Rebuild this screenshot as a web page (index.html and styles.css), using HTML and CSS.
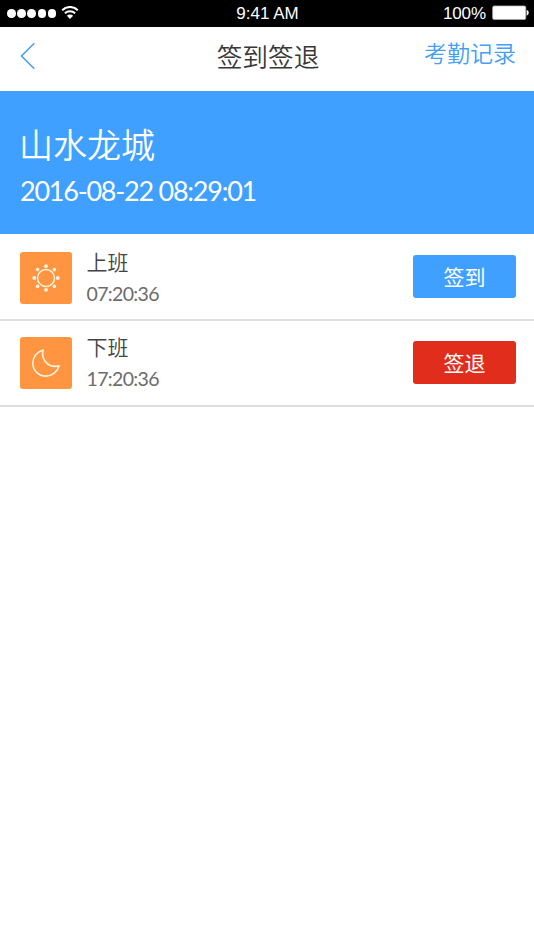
FILE: index.html
```html
<!DOCTYPE html>
<html lang="zh-CN">
<head>
<meta charset="utf-8">
<title>签到签退</title>
<link rel="stylesheet" href="styles.css">
</head>
<body>
<header class="status">
  <div class="signal">
    <span class="dots"><i></i><i></i><i></i><i></i><i></i></span>
    <svg class="wifi" width="18" height="14" viewBox="0 0 18 14" fill="none" stroke="#fff" stroke-width="2">
      <path d="M1.2 4.2a11 11 0 0 1 15.6 0M3.9 7.3a7.2 7.2 0 0 1 10.2 0"/>
      <path d="M9 13 5.9 9.8a4.4 4.4 0 0 1 6.2 0z" fill="#fff" stroke="none"/>
    </svg>
  </div>
  <span class="clock">9:41 AM</span>
  <div class="power">
    <span class="percent">100%</span>
    <svg class="battery" width="37" height="16" viewBox="0 0 37 16">
      <rect x=".6" y=".9" width="33.2" height="13.6" rx="1.5" fill="#fff" stroke="#aaa" stroke-width=".7"/>
      <path d="M34.6 4.7q2.2 1 2.2 3t-2.2 3z" fill="#fff"/>
    </svg>
  </div>
</header>
<nav class="nav">
  <svg class="back" width="16" height="28" viewBox="0 0 16 28" fill="none" stroke="#4c9fee" stroke-width="1.6"><path d="M14.3 1.2 1.5 14l12.8 12.8"/></svg>
  <h1 class="title">签到签退</h1>
  <a class="records">考勤记录</a>
</nav>
<section class="banner">
  <div class="place">山水龙城</div>
  <div class="now">2016-08-22 08:29:01</div>
</section>
<main>
  <div class="row">
    <div class="tile">
      <svg width="28" height="28" viewBox="-14 -14 28 28">
        <circle r="8.5" fill="none" stroke="#fff3df" stroke-width="1.5"/>
        <g fill="#fff3df"><circle cy="-11.8" r="1.9"/><circle cy="11.8" r="1.9"/><circle cx="-11.8" r="1.9"/><circle cx="11.8" r="1.9"/><circle cx="8.4" cy="-8.4" r="1.8"/><circle cx="8.4" cy="8.4" r="1.8"/><circle cx="-8.4" cy="-8.4" r="1.8"/><circle cx="-8.4" cy="8.4" r="1.8"/></g>
      </svg>
    </div>
    <div class="info"><div class="label">上班</div><div class="time">07:20:36</div></div>
    <button class="btn in">签到</button>
  </div>
  <div class="row">
    <div class="tile">
      <svg width="28" height="28" viewBox="0 0 28 28" fill="none" stroke="#fff3df" stroke-width="1.6" stroke-linejoin="round"><path d="M11.2.9C5.2 2.6.8 7.7.8 14c0 7.4 5.8 13.1 13.1 13.1 6.3 0 11.6-4.3 13.2-10.3-4.4 1.2-8.7.6-12-2.4C11.4 11 9.8 5.800 11.2.9z"/></svg>
    </div>
    <div class="info"><div class="label">下班</div><div class="time">17:20:36</div></div>
    <button class="btn out">签退</button>
  </div>
</main>
</body>
</html>
```
FILE: styles.css
```css
* { box-sizing: border-box; }
body {
  margin: 0;
  min-height: 950px;
  background: #fff;
  color: #444;
  font-family: "Liberation Sans", "Noto Sans CJK SC", sans-serif;
}
svg { display: block; }
.status {
  display: grid;
  grid-template-columns: 1fr auto 1fr;
  align-items: center;
  height: 27px;
  padding: 0 5px 0 7px;
  background: #000;
  color: #fff;
  font-size: 17px;
  line-height: 27px;
}
.clock { margin-left: -1px; }
.percent { letter-spacing: -.1px; }
.signal { display: flex; align-items: center; gap: 5px; }
.dots { display: flex; gap: 1.6px; }
.dots i { width: 8.6px; height: 8.6px; border-radius: 50%; background: #fff; }
.wifi { margin-top: -2px; }
.battery { margin-top: -1px; }
.power { display: flex; align-items: center; justify-content: flex-end; gap: 6px; }
.nav {
  display: grid;
  grid-template-columns: 1fr auto 1fr;
  height: 64px;
  padding: 0 18px 0 20px;
}
.back { margin-top: 15px; }
.title { margin: 0; font-size: 25.7px; font-weight: 350; line-height: 62px; color: #383838; }
.records { justify-self: end; font-size: 23px; font-weight: 350; line-height: 54px; color: #459ff3; }
.banner { height: 143px; padding: 34px 19px 0; background: #40a0ff; color: #fff; }
.place { font-size: 34px; line-height: 42px; font-weight: 350; }
.now {
  margin: 7px 0 0 1px;
  font-family: Lato, sans-serif;
  font-size: 27px;
  line-height: 34px;
  letter-spacing: -1.25px;
  white-space: nowrap;
}
.row {
  display: flex;
  align-items: flex-start;
  height: 87px;
  padding: 18px 18px 0 20px;
  border-bottom: 2px solid #dedede;
}
.row + .row { height: 86px; padding-top: 16px; }
.tile {
  display: grid;
  place-items: center;
  width: 52px;
  height: 52px;
  border-radius: 3px;
  background: #ff9540;
}
.info { margin-left: 14.5px; }
.label { font-size: 21px; font-weight: 350; line-height: 24px; margin-top: -1px; }
.time {
  margin-top: 7px;
  font-family: Lato, sans-serif;
  font-size: 19.5px;
  line-height: 24px;
  letter-spacing: -.65px;
  color: #6c6c6c;
}
.btn {
  width: 103px;
  height: 43px;
  margin: 3px 0 0 auto;
  padding: 0;
  border: 0;
  border-radius: 3px;
  color: #fff;
  font: 21px/43px "Noto Sans CJK SC", sans-serif;
}
.in { background: #40a0ff; }
.out { background: #e12d1c; margin-top: 4px; }
```
